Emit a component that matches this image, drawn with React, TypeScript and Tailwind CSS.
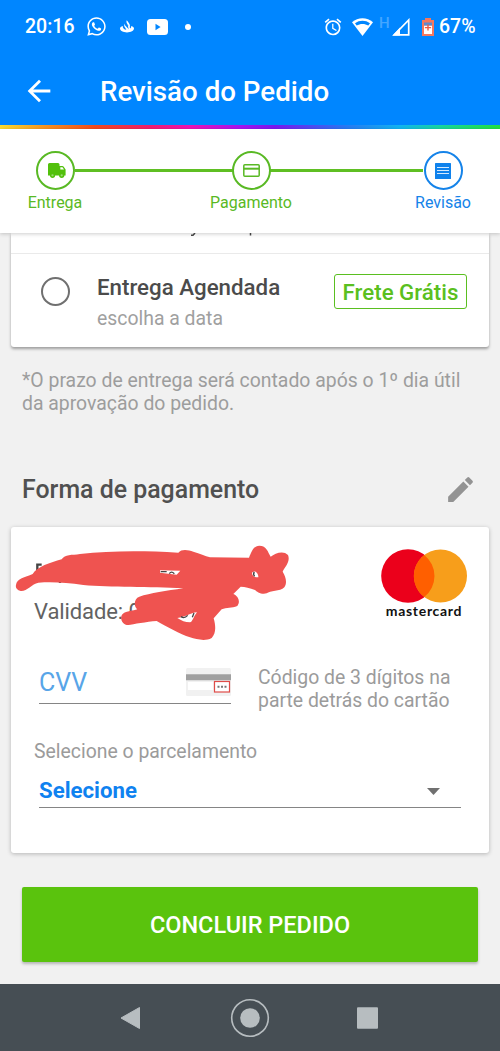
import type { ReactNode } from 'react';
import { FaWhatsapp } from 'react-icons/fa';
import { MdAlarm, MdArrowBack, MdEdit } from 'react-icons/md';

function StatusBar() {
  return (
    <div className="flex h-[53px] items-center pl-[25px] pr-[25px] text-[19.5px] font-medium text-white">
      <span className="w-[61px]">20:16</span>
      <FaWhatsapp className="h-[21px] w-[21px]" />
      <svg className="ml-[13px] h-[13px] w-[14px]" viewBox="0 0 14 13" fill="currentColor">
        <path d="M2.8 6C1 6.6 0 7.500 0 8.600c0 2.100 3.100 3.900 7 3.900s7-1.800 7-3.900c0-1.100-1-2-2.800-2.600.1 1-.1 1.800-.7 2.600L8 4.800 7.400 2.700 8.400 8.300 9 9.600 5 5.300 4 3.500 4.300 6.300 6.400 9.800C4 9.600 2.500 8 2.800 6z" />
        <path d="M6.800.2C8 1.600 10 4 10 5.900L9.800 7.500 7.200 3.800C6.300 2.500 6.300 1.200 6.800.2z" />
      </svg>
      <svg className="ml-[13px] h-[16px] w-[21px]" viewBox="0 0 21 16">
        <rect width="21" height="16" rx="3.500" fill="#fff" />
        <path d="M8.500 4.800v6.400L13.600 8z" fill="#0086ff" />
      </svg>
      <span className="ml-[17px] h-[6px] w-[6px] rounded-full bg-white" />
      <div className="ml-auto flex items-center">
        <MdAlarm className="h-[20px] w-[20px]" />
        <svg className="ml-[9px] h-[18px] w-[21px]" viewBox="0 0 21 18">
          <path d="M0 4.300C6-1.100 15-1.100 21 4.300L10.500 18z" fill="#fff" />
          <path d="M3 5.300C7.500 2 13.500 2 18 5.300L16.300 7.500C13 5.400 8 5.400 4.700 7.500z" fill="#0086ff" />
        </svg>
        <span className="mb-[7px] ml-[6px] w-[11px] text-[15px] leading-none text-[#45a6ff]">H</span>
        <svg className="ml-[2px] h-[18px] w-[18px]" viewBox="0 0 18 18">
          <path d="M16.700 2v14.800H2.200z" fill="none" stroke="#fff" strokeWidth="1.700" />
          <path d="M.5 17.500L8 9.500v8z" fill="#fff" />
        </svg>
        <svg className="ml-[12px] h-[18px] w-[12px]" viewBox="0 0 12 18">
          <path d="M3 0h6v2h3v16H0V2h3z" fill="#f4775f" />
          <path d="M2 7.500h8V16H2z" fill="#fff" />
          <path d="M2 4.500h8v3H2z" fill="#5c8bd0" />
          <path d="M5.300 6.500h1.400v2.400h2.400v1.300H6.700v2.400H5.300v-2.400H2.900V8.900h2.400z" fill="#ef5a45" />
        </svg>
        <span className="ml-[5px] w-[36px]">67%</span>
      </div>
    </div>
  );
}

function Step({ label, active, children }: { label: string; active?: boolean; children: ReactNode }) {
  return (
    <div className={`flex w-[90px] flex-col items-center ${active ? 'text-[#1583e9]' : 'text-[#59b924]'}`}>
      <div className="flex h-[39px] w-[39px] items-center justify-center rounded-full border-2 border-current bg-white">
        {children}
      </div>
      <span className="mt-[2px] text-[16px] leading-[22px]">{label}</span>
    </div>
  );
}

function Stepper() {
  return (
    <div className="relative z-10 h-[104px] bg-white pl-[10px] pt-[22px] shadow-[0_1px_4px_rgba(0,0,0,0.2)]">
      <div className="absolute left-[75px] top-[40px] h-[3px] w-[348px] bg-[#5fbf23]" />
      <div className="relative flex">
        <Step label="Entrega">
          <svg className="ml-[3px] h-[15px] w-[18px]" viewBox="0 0 18 15">
            <path
              d="M1.500 0H10Q11.500 0 11.500 1.500V3H14.300Q15.300 3 15.900 3.900L17.600 6.400V12.500H0V1.500Q0 0 1.500 0z"
              fill="#52c00c"
            />
            <path d="M12.300 4.300h2.200l1.500 2.300h-3.700z" fill="#fff" />
            <circle cx="4.500" cy="12.300" r="1.900" fill="#9bdc74" stroke="#52c00c" strokeWidth="1.500" />
            <circle cx="13.700" cy="12.300" r="1.900" fill="#9bdc74" stroke="#52c00c" strokeWidth="1.500" />
          </svg>
        </Step>
        <div className="ml-[106px]">
          <Step label="Pagamento">
            <svg className="h-[13px] w-[17px]" viewBox="0 0 17 13">
              <rect x="0.800" y="0.800" width="15.400" height="11.400" rx="1" fill="none" stroke="currentColor" strokeWidth="1.500" />
              <path d="M1 4.700h15" stroke="currentColor" strokeWidth="2" />
            </svg>
          </Step>
        </div>
        <div className="ml-[102px]">
          <Step label="Revisão" active>
            <svg className="h-[16px] w-[16px]" viewBox="0 0 16 16">
              <rect width="16" height="16" rx="0.500" fill="#0f82ec" />
              <path d="M2 4.500h12M2 7.500h12M2 10.500h12" stroke="#d5eaff" strokeWidth="1.200" />
            </svg>
          </Step>
        </div>
      </div>
    </div>
  );
}

function DeliveryCard() {
  return (
    <div className="mx-[11px] h-[114px] rounded-b-[3px] bg-white shadow-[0_2px_3px_rgba(0,0,0,0.35)]">
      <div className="h-[21px] border-b border-[#eaeaea]">
        {/* descenders of the row scrolled under the stepper */}
        <svg className="ml-[178px] h-[3px] w-[66px]" viewBox="0 0 66 3">
          <path d="M2 2.200h2L6 0M61.500 0v2.500" fill="none" stroke="#4a4a4a" strokeWidth="1.500" />
        </svg>
      </div>
      <div className="flex">
        <span className="ml-[30px] mt-[23px] h-[29px] w-[29px] rounded-full border-[2.500px] border-[#707070]" />
        <div className="ml-[27px] mt-[19px]">
          <p className="text-[22.300px] font-medium leading-[28px] text-[#4b4b4b]">Entrega Agendada</p>
          <p className="mt-[6px] text-[19.400px] leading-[24px] text-[#a0a0a0]">escolha a data</p>
        </div>
        <span className="ml-auto mr-[22px] mt-[20px] flex h-[35px] w-[133px] items-center justify-center whitespace-nowrap rounded-[3px] border-[1.500px] border-[#5abf20] pt-[2px] text-[22.300px] font-medium text-[#5abf20]">
          Frete Grátis
        </span>
      </div>
    </div>
  );
}

function MastercardLogo() {
  return (
    <div className="flex w-[86px] flex-col items-center">
      <svg className="h-[54px] w-[86px]" viewBox="0 0 86 54">
        <circle cx="27" cy="27" r="26.800" fill="#eb001b" />
        <circle cx="59.500" cy="27" r="26.500" fill="#f79e1b" />
        <path d="M43.200 5.900a26.800 26.800 0 0 1 0 42.200 26.500 26.500 0 0 1 0-42.200z" fill="#ff5f00" />
      </svg>
      <span className="[font-family:Lato,sans-serif] text-[14px] font-bold leading-[16px] tracking-[0.700px] text-[#111]">
        mastercard
      </span>
    </div>
  );
}

function Scribble() {
  return (
    <svg className="absolute -left-[11px] top-[3px] h-[120px] w-[300px]" viewBox="0 0 900 360">
      <path d="M112 130V104H125M180 152v7" stroke="#444" strokeWidth="7" fill="none" />
      <path
        fill="#ef5350"
        fillRule="evenodd"
        d="M48 165C50 145 75 142 98 132C112 110 150 98 185 88C195 72 215 76 240 72C330 62 430 62 535 68C545 56 565 60 580 65C600 70 615 78 630 82L747 83C755 65 760 48 778 47C800 47 803 65 812 80C825 70 850 60 864 75C872 95 855 110 848 125C858 140 862 160 853 172C840 185 810 182 800 190C785 195 770 185 765 180C750 175 735 170 722 170L700 192C715 198 722 215 712 228C695 235 680 232 665 238L641 265C648 290 648 310 635 324C615 335 590 328 570 322C540 312 500 290 470 273C440 275 400 283 385 285C365 285 358 262 368 252C380 242 400 243 412 238C400 228 402 205 418 200C450 190 500 182 550 175C450 170 330 172 250 165C200 158 160 155 115 158C95 162 80 185 62 183C50 180 46 172 48 165ZM480 121L541 122L530 134L480 128ZM756 128C765 118 776 130 775 142C764 142 756 138 756 128ZM532 264C555 262 572 248 591 247C580 260 578 276 570 277C555 277 545 272 532 264Z"
      />
      <path d="M482 125H500M508 131Q514 122 523 131M763 126Q758 133 764 139M543 260Q553 267 563 256M582 249L577 262" stroke="#454545" strokeWidth="4" fill="none" />
    </svg>
  );
}

function PaymentCard() {
  return (
    <div className="relative mx-[11px] h-[326px] rounded-[3px] bg-white shadow-[0_1px_4px_rgba(0,0,0,0.25)]">
      <div className="flex h-[131px] justify-between pl-[23px] pr-[22px]">
        <p className="pt-[72px] text-[22px] leading-[26px] tracking-[-0.100px] text-[#626262]">Validade: 0</p>
        <div className="pt-[22px]">
          <MastercardLogo />
        </div>
      </div>
      <Scribble />
      <div className="flex pl-[28px]">
        <div className="flex h-[46px] w-[192px] items-start justify-between border-b-[1.500px] border-[#858585]">
          <span className="pt-[10px] text-[25px] leading-[30px] text-[#58a5e8]">CVV</span>
          <svg className="mt-[10px] h-[28px] w-[45px]" viewBox="0 0 45 28">
            <rect width="45" height="28" rx="1.500" fill="#f1f1f1" />
            <path d="M0 6.200h45v6H0z" fill="#a0a0a0" />
            <path d="M2 14h25v8H2z" fill="#fff" />
            <rect x="28.500" y="13.500" width="15" height="10.500" fill="#fff" stroke="#df4c48" strokeWidth="1.200" />
            <path d="M31.500 18.700h9" stroke="#777" strokeWidth="2" strokeDasharray="2 1.500" />
          </svg>
        </div>
        <p className="ml-[27px] mt-[8px] whitespace-nowrap text-[19.400px] leading-[23px] text-[#9b9b9b]">
          Código de 3 dígitos na
          <br />
          parte detrás do cartão
        </p>
      </div>
      <p className="ml-[23px] mt-[28px] text-[19.400px] leading-[24px] text-[#9b9b9b]">Selecione o parcelamento</p>
      <div className="ml-[28px] mt-[7px] flex h-[37px] w-[422px] items-start justify-between border-b-[1.500px] border-[#858585] pr-[21px]">
        <span className="pt-[5px] text-[22.200px] font-bold leading-[28px] text-[#0f82f0]">Selecione</span>
        <svg className="mt-[17px] h-[7px] w-[13px]" viewBox="0 0 13 7">
          <path d="M0 0h13L6.500 7z" fill="#707070" />
        </svg>
      </div>
    </div>
  );
}

function NavigationBar() {
  return (
    <div className="flex h-[67px] justify-center bg-[#464e54] pt-[14px]">
      <svg className="h-[40px] w-[260px]" viewBox="0 0 260 40">
        <path d="M1 20L19.500 9.500v21z" fill="#b7bdc0" stroke="#b7bdc0" strokeLinejoin="round" />
        <circle cx="130" cy="20" r="18.300" fill="none" stroke="#b7bdc0" strokeWidth="1.600" />
        <circle cx="130" cy="20" r="9.800" fill="#b7bdc0" />
        <rect x="237" y="9.300" width="21" height="21.500" rx="1" fill="#b7bdc0" />
      </svg>
    </div>
  );
}

export default function App() {
  return (
    <div className="h-[1051px] w-[500px] overflow-hidden bg-[#f1f1f1] font-['Roboto',sans-serif]">
      <header className="h-[125px] bg-[#0086ff] text-white">
        <StatusBar />
        <div className="flex h-[76px] items-center pl-[22px]">
          <MdArrowBack className="h-[34px] w-[34px]" />
          <h1 className="ml-[44px] pt-[1px] text-[27.700px] font-medium">Revisão do Pedido</h1>
        </div>
      </header>
      <div className="relative h-[4px] bg-[linear-gradient(90deg,#f8dc32_0%,#f49322_9%,#f24a1c_19%,#f01e70_30%,#ee14b4_38%,#a614ee_48%,#7b18ee_55%,#2878f2_69%,#12b4f0_80%,#18d4a0_88%,#22e040_100%)]" />
      <Stepper />
      <main className="h-[751px]">
        <DeliveryCard />
        <p className="ml-[22px] mt-[23px] whitespace-nowrap text-[19.400px] leading-[22.500px] text-[#9d9d9d]">
          *O prazo de entrega será contado após o 1º dia útil
          <br />
          da aprovação do pedido.
        </p>
        <div className="mb-[21px] mt-[58px] flex h-[33px] items-center justify-between pl-[22px] pr-[23px]">
          <h2 className="pt-[1px] text-[24.900px] font-medium text-[#505050]">Forma de pagamento</h2>
          <MdEdit className="h-[33px] w-[33px] text-[#939393]" />
        </div>
        <PaymentCard />
        <button className="ml-[22px] mt-[34px] block h-[75px] w-[456px] rounded-[2px] bg-[#5ac30d] pt-[3px] text-[23.500px] font-medium text-white shadow-[0_2px_3px_rgba(0,0,0,0.25)]">
          CONCLUIR PEDIDO
        </button>
      </main>
      <NavigationBar />
    </div>
  );
}
